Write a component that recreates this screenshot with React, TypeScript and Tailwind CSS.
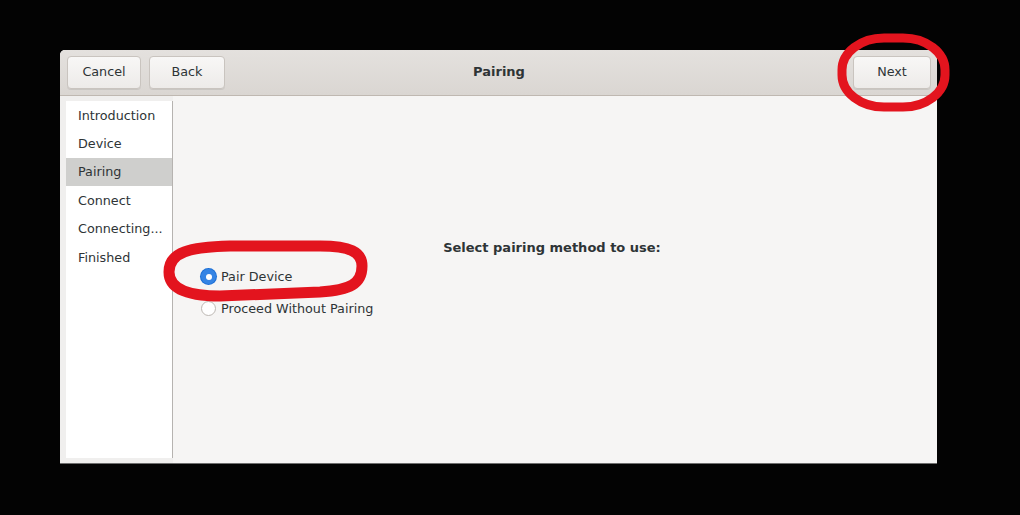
const font = { fontFamily: '"DejaVu Sans", "Liberation Sans", sans-serif' };

const steps = ["Introduction", "Device", "Pairing", "Connect", "Connecting...", "Finished"];

function HeaderButton({ label, className = "" }: { label: string; className?: string }) {
  return (
    <button
      className={
        "h-[33px] rounded-[4px] border border-[#c9c4bf] bg-gradient-to-b from-[#f8f7f6] to-[#edebe9] text-[12.75px] text-[#2e3436] shadow-[0_1px_0_rgba(0,0,0,0.08)] " +
        className
      }
    >
      {label}
    </button>
  );
}

function Radio({ checked, label }: { checked?: boolean; label: string }) {
  return (
    <label className="flex h-[32px] items-center gap-[5px] text-[12.75px] text-[#2e3436]">
      {checked ? (
        <span className="flex h-[15px] w-[15px] items-center justify-center rounded-full bg-[#3584e4] shadow-[0_0_0_1px_#1c6fd6]">
          <span className="h-[6px] w-[6px] rounded-full bg-white" />
        </span>
      ) : (
        <span className="h-[15px] w-[15px] rounded-full border border-[#bdb8b3] bg-white" />
      )}
      <span>{label}</span>
    </label>
  );
}

export default function App() {
  return (
    <div className="relative h-[515px] w-[1020px] overflow-hidden bg-[#030303] pl-[60px] pt-[50px]" style={font}>
      {/* window */}
      <div className="flex h-[414px] w-[877px] flex-col overflow-hidden rounded-t-[5px] border-b border-[#6e6e6e] bg-[#f6f5f4]">
        {/* header bar */}
        <div className="grid h-[46px] grid-cols-[1fr_auto_1fr] items-center border-b border-[#bfb8b1] bg-gradient-to-b from-[#e4e1de] to-[#dad6d2] pb-[1px] pl-[7px] pr-[6px]">
          <div className="flex">
            <HeaderButton label="Cancel" className="w-[74px]" />
            <HeaderButton label="Back" className="ml-[8px] w-[76px]" />
          </div>
          <div className="text-center text-[13px] font-bold text-[#2e3436]">Pairing</div>
          <div className="flex justify-end">
            <HeaderButton label="Next" className="w-[78px]" />
          </div>
        </div>

        <div className="flex flex-1">
          {/* sidebar */}
          <div className="flex w-[113px] bg-[#f0efee] pl-[6px] pt-[5px] pb-[5px]">
            <div className="flex-1 border-r border-[#b6b3b0] bg-white">
              {steps.map((s) => (
                <div
                  key={s}
                  className={
                    "flex h-[28.4px] items-center pl-[12px] text-[12.75px] text-[#2e3436] " +
                    (s === "Pairing" ? "bg-[#cfcfcd]" : "")
                  }
                >
                  {s}
                </div>
              ))}
            </div>
          </div>

          {/* content */}
          <div className="flex flex-1 flex-col pt-[142px]">
            <div className="pr-[6px] text-center text-[13px] font-bold text-[#2e3436]">Select pairing method to use:</div>
            <div className="mt-[3px] flex flex-col pl-[28px]">
              <Radio checked label="Pair Device" />
              <Radio label="Proceed Without Pairing" />
            </div>
          </div>
        </div>
      </div>

      {/* red annotation marks */}
      <svg className="pointer-events-none absolute left-0 top-0" width="1020" height="515">
        <rect x="842" y="38" width="103" height="69" rx="42" ry="32" fill="none" stroke="#e3141e" strokeWidth="9" />
        <path
          d="M169 272 C169 252 190 247 230 246 L320 246 C350 246 362 252 362 266 C362 284 350 290 320 292 L220 296 C185 296 169 288 169 272 Z"
          fill="none"
          stroke="#e3141e"
          strokeWidth="11"
        />
      </svg>
    </div>
  );
}
